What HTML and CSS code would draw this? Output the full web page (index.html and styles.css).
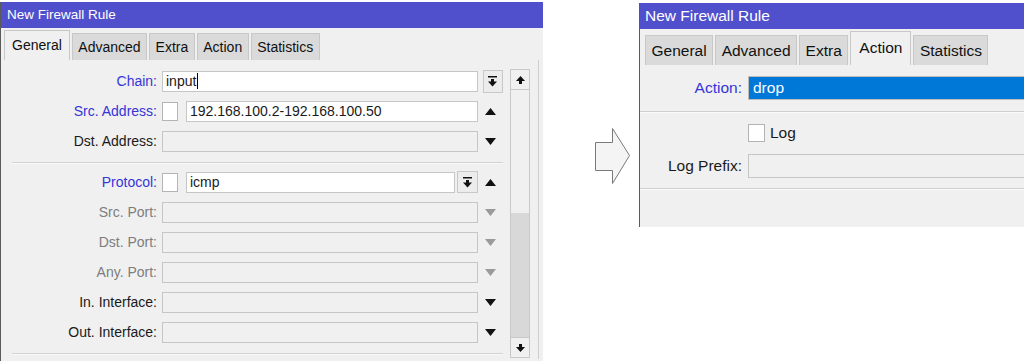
FILE: index.html
```html
<!DOCTYPE html>
<html lang="en">
<head>
    <meta charset="UTF-8">
    <title>New Firewall Rule</title>
    <link rel="stylesheet" href="styles.css">
</head>
<body>
<div class="scene">

    <!-- Janela da esquerda: aba General -->
    <div class="window window-left">
        <div class="titlebar">New Firewall Rule</div>
        <div class="tabs">
            <div class="tab active">General</div>
            <div class="tab">Advanced</div>
            <div class="tab">Extra</div>
            <div class="tab">Action</div>
            <div class="tab">Statistics</div>
        </div>
        <div class="panel">
            <div class="form">
                <div class="row">
                    <span class="lbl blue">Chain:</span>
                    <div class="field"><div class="input white">input<span class="caret"></span></div></div>
                    <div class="arrow-cell">
                        <span class="dd-btn chain-btn">
                            <svg width="9" height="11" viewBox="0 0 9 11"><rect x="0" y="0" width="9" height="1.5"/><rect x="3" y="3" width="3" height="3"/><polygon points="0,5.5 9,5.5 4.5,10.5"/></svg>
                        </span>
                    </div>
                </div>
                <div class="row">
                    <span class="lbl blue">Src. Address:</span>
                    <div class="field"><span class="check"></span><div class="input white">192.168.100.2-192.168.100.50</div></div>
                    <div class="arrow-cell"><svg width="11" height="7" viewBox="0 0 11 7"><polygon points="0,7 11,7 5.5,0"/></svg></div>
                </div>
                <div class="row">
                    <span class="lbl">Dst. Address:</span>
                    <div class="field"><div class="input"></div></div>
                    <div class="arrow-cell"><svg width="11" height="7" viewBox="0 0 11 7"><polygon points="0,0 11,0 5.5,7"/></svg></div>
                </div>

                <div class="sep"></div>

                <div class="row">
                    <span class="lbl blue">Protocol:</span>
                    <div class="field">
                        <span class="check"></span>
                        <div class="input white">icmp</div>
                        <span class="dd-btn proto-btn">
                            <svg width="9" height="11" viewBox="0 0 9 11"><rect x="0" y="0" width="9" height="1.5"/><rect x="3" y="3" width="3" height="3"/><polygon points="0,5.5 9,5.5 4.5,10.5"/></svg>
                        </span>
                    </div>
                    <div class="arrow-cell"><svg width="11" height="7" viewBox="0 0 11 7"><polygon points="0,7 11,7 5.5,0"/></svg></div>
                </div>
                <div class="row">
                    <span class="lbl muted">Src. Port:</span>
                    <div class="field"><div class="input"></div></div>
                    <div class="arrow-cell grey"><svg width="11" height="7" viewBox="0 0 11 7"><polygon points="0,0 11,0 5.5,7"/></svg></div>
                </div>
                <div class="row">
                    <span class="lbl muted">Dst. Port:</span>
                    <div class="field"><div class="input"></div></div>
                    <div class="arrow-cell grey"><svg width="11" height="7" viewBox="0 0 11 7"><polygon points="0,0 11,0 5.5,7"/></svg></div>
                </div>
                <div class="row">
                    <span class="lbl muted">Any. Port:</span>
                    <div class="field"><div class="input"></div></div>
                    <div class="arrow-cell grey"><svg width="11" height="7" viewBox="0 0 11 7"><polygon points="0,0 11,0 5.5,7"/></svg></div>
                </div>
                <div class="row">
                    <span class="lbl">In. Interface:</span>
                    <div class="field"><div class="input"></div></div>
                    <div class="arrow-cell"><svg width="11" height="7" viewBox="0 0 11 7"><polygon points="0,0 11,0 5.5,7"/></svg></div>
                </div>
                <div class="row">
                    <span class="lbl">Out. Interface:</span>
                    <div class="field"><div class="input"></div></div>
                    <div class="arrow-cell"><svg width="11" height="7" viewBox="0 0 11 7"><polygon points="0,0 11,0 5.5,7"/></svg></div>
                </div>

                <div class="sep sep-bottom"></div>
            </div>

            <!-- Barra de rolagem -->
            <div class="scrollbar">
                <div class="sb-btn">
                    <svg width="9" height="8" viewBox="0 0 9 8"><polygon points="0,5 9,5 4.5,0"/><rect x="3" y="5" width="3" height="3"/></svg>
                </div>
                <div class="sb-thumb"></div>
                <div class="sb-track"></div>
                <div class="sb-btn">
                    <svg width="9" height="8" viewBox="0 0 9 8"><rect x="3" y="0" width="3" height="3"/><polygon points="0,3 9,3 4.5,8"/></svg>
                </div>
            </div>
        </div>
    </div>

    <!-- Seta entre as janelas -->
    <div class="gap">
        <svg class="big-arrow" width="37" height="58" viewBox="0 0 37 58">
            <polygon points="1.5,15.5 18.5,15.5 18.5,1.5 35.5,28.5 18.5,56.5 18.5,43.5 1.5,43.5" fill="#f4f4f4" stroke="#7a7a7a" stroke-width="1"/>
        </svg>
    </div>

    <!-- Janela da direita: aba Action -->
    <div class="window window-right">
        <div class="titlebar">New Firewall Rule</div>
        <div class="tabs">
            <div class="tab">General</div>
            <div class="tab">Advanced</div>
            <div class="tab">Extra</div>
            <div class="tab active">Action</div>
            <div class="tab">Statistics</div>
        </div>
        <div class="panel-right">
            <div class="row-r">
                <span class="lbl-r blue">Action:</span>
                <div class="input-r selected">drop</div>
            </div>
            <div class="sep-r"></div>
            <div class="row-r log-row">
                <span class="lbl-r"></span>
                <span class="check-r"></span>
                <span class="log-text">Log</span>
            </div>
            <div class="row-r prefix-row">
                <span class="lbl-r">Log Prefix:</span>
                <div class="input-r"></div>
            </div>
            <div class="sep-r sep-r-bottom"></div>
        </div>
    </div>

</div>
</body>
</html>
```

FILE: styles.css
```css
body {
    margin: 0;
    padding: 0;
    background: #fff;
    font-family: 'Liberation Sans', Arial, sans-serif;
    color: #1a1a1a;
}

.scene {
    display: flex;
    align-items: flex-start;
    width: 1024px;
    height: 361px;
    overflow: hidden;
}

.window {
    background: #f0f0f0;
    border-left: 1px solid #5a5a5a;
    box-sizing: border-box;
    overflow: hidden;
}

.titlebar {
    height: 26px;
    line-height: 26px;
    background: #5050cc;
    color: #fff;
    white-space: nowrap;
}

.tabs {
    display: flex;
    align-items: flex-end;
    gap: 2px;
}

.tab {
    box-sizing: border-box;
    background: #dadada;
    border: 1px solid #c8c8c8;
    border-bottom: none;
    color: #111;
    white-space: nowrap;
}

.tab.active {
    background: #f0f0f0;
}

.blue {
    color: #3535d8;
}

.muted {
    color: #7d7d7d;
}

/* Janela da esquerda */
.window-left {
    width: 543px;
    height: 359px;
    margin-top: 2px;
}

.window-left .titlebar {
    font-size: 13.5px;
    padding-left: 6px;
}

.window-left .tabs {
    height: 32px;
    padding-left: 3px;
}

.window-left .tab {
    height: 27px;
    line-height: 27px;
    padding: 0 5.5px;
    font-size: 14px;
}

.window-left .tab.active {
    height: 30px;
    line-height: 29px;
    padding: 0 7px;
}

.panel {
    display: flex;
    align-items: flex-start;
    height: 299px;
    margin-right: 4px;
    border-right: 1px solid #cfcfcf;
}

.form {
    width: 502px;
    padding-top: 6px;
}

.row {
    display: flex;
    align-items: center;
    height: 30px;
    font-size: 14px;
}

.lbl {
    box-sizing: border-box;
    width: 161px;
    padding-right: 5px;
    text-align: right;
    white-space: nowrap;
}

.field {
    flex: 1;
    display: flex;
    align-items: center;
}

.input {
    flex: 1;
    box-sizing: border-box;
    height: 21px;
    line-height: 19px;
    padding-left: 3px;
    border: 1px solid #c6c6c6;
    background: #f0f0f0;
    white-space: nowrap;
    overflow: hidden;
}

.input.white {
    background: #fff;
}

.caret {
    display: inline-block;
    width: 1px;
    height: 16px;
    margin-left: 1px;
    vertical-align: -3px;
    background: #000;
}

.check {
    box-sizing: border-box;
    width: 16px;
    height: 19px;
    margin-right: 8px;
    border: 1px solid #b4b4b4;
    background: #fff;
}

.arrow-cell {
    width: 25px;
    display: flex;
    justify-content: center;
    align-items: center;
    fill: #111;
}

.arrow-cell.grey {
    fill: #9a9a9a;
}

.dd-btn {
    box-sizing: border-box;
    display: flex;
    justify-content: center;
    align-items: center;
    border: 1px solid #c8c8c8;
    background: #ececec;
    fill: #111;
}

.chain-btn {
    width: 20px;
    height: 23px;
    margin-left: 4px;
}

.proto-btn {
    width: 21px;
    height: 22px;
    margin-left: 2px;
}

.sep {
    height: 1px;
    margin: 6px 0 3px 11px;
    background: #d2d2d2;
    border-bottom: 1px solid #fafafa;
}

.sep-bottom {
    margin-top: 6px;
}

.scrollbar {
    width: 20px;
    margin-top: 9px;
    margin-left: 7px;
    display: flex;
    flex-direction: column;
}

.sb-btn {
    box-sizing: border-box;
    height: 21px;
    display: flex;
    justify-content: center;
    align-items: center;
    border: 1px solid #c8c8c8;
    background: #f0f0f0;
    fill: #111;
}

.sb-thumb {
    height: 123px;
    box-sizing: border-box;
    border-left: 1px solid #c8c8c8;
    border-right: 1px solid #c8c8c8;
    background: #f0f0f0;
}

.sb-track {
    height: 124px;
    box-sizing: border-box;
    border-left: 1px solid #c8c8c8;
    border-right: 1px solid #c8c8c8;
    background: #d8d8d8;
}

/* Seta */
.gap {
    width: 96px;
    flex-shrink: 0;
}

.big-arrow {
    display: block;
    margin-left: 51px;
    margin-top: 127px;
}

/* Janela da direita */
.window-right {
    width: 385px;
    height: 224px;
    margin-top: 3px;
    flex-shrink: 0;
}

.window-right .titlebar {
    font-size: 15.5px;
    padding-left: 5px;
}

.window-right .tabs {
    height: 36px;
    padding-left: 5px;
}

.window-right .tab {
    height: 30px;
    line-height: 30px;
    padding: 0 5.5px;
    font-size: 15.5px;
}

.window-right .tab.active {
    height: 34px;
    line-height: 32px;
    padding: 0 8px;
}

.panel-right {
    padding-top: 11px;
    font-size: 15.5px;
}

.row-r {
    display: flex;
    align-items: center;
    height: 24px;
}

.lbl-r {
    box-sizing: border-box;
    width: 108px;
    flex-shrink: 0;
    padding-right: 6px;
    text-align: right;
    white-space: nowrap;
}

.input-r {
    box-sizing: border-box;
    width: 300px;
    flex-shrink: 0;
    height: 24px;
    line-height: 22px;
    padding-left: 4px;
    border: 1px solid #c6c6c6;
    background: #f0f0f0;
}

.input-r.selected {
    background: #0078d7;
    border-color: #bdbdbd;
    color: #fff;
}

.sep-r {
    height: 1px;
    margin: 11px 0 0 0;
    background: #cfcfcf;
    border-bottom: 1px solid #fafafa;
}

.log-row {
    margin-top: 8px;
}

.check-r {
    box-sizing: border-box;
    width: 17px;
    height: 18px;
    border: 1px solid #b4b4b4;
    background: #fff;
}

.log-text {
    margin-left: 5px;
}

.prefix-row {
    margin-top: 9px;
}

.sep-r-bottom {
    margin-top: 10px;
}
```
